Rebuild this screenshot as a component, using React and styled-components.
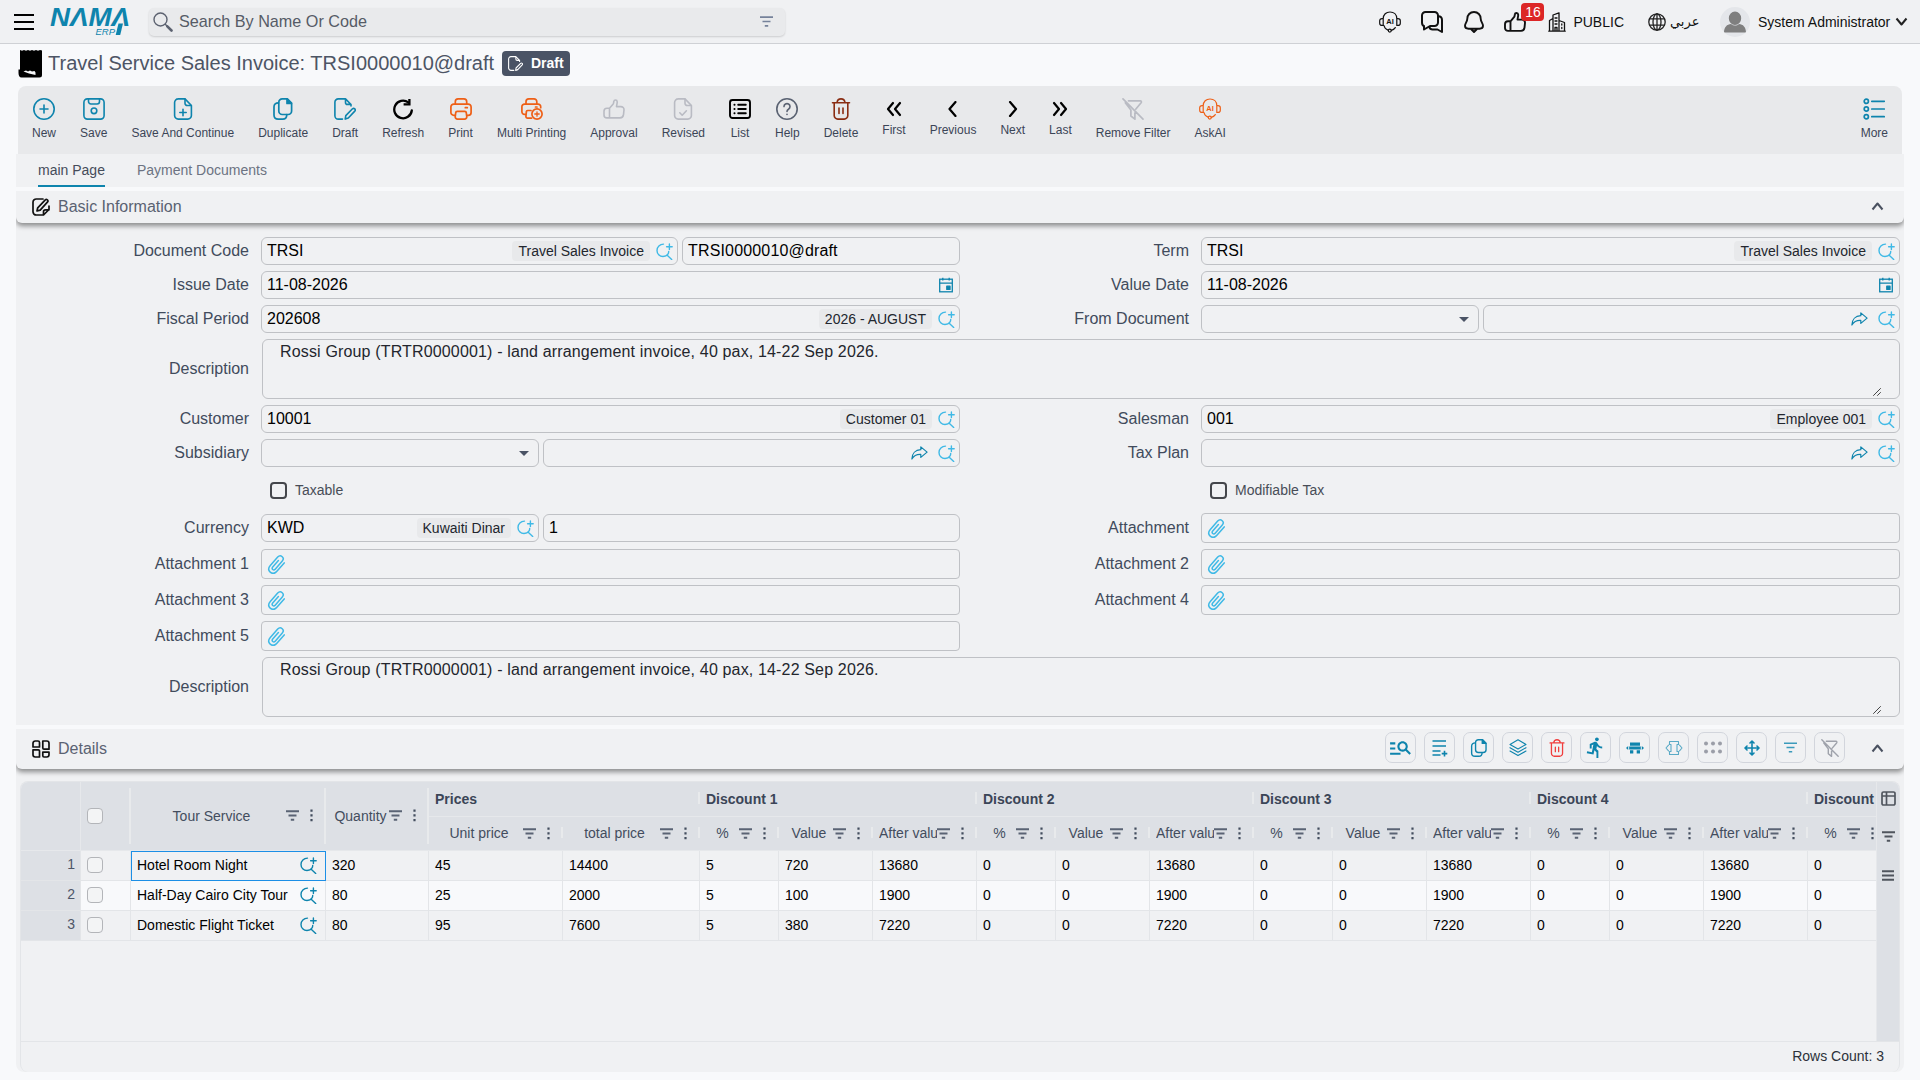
import React from 'react';
import styled, { createGlobalStyle } from 'styled-components';
import { MdDirectionsRun, MdManageSearch } from 'react-icons/md';

const teal = '#0e84ad';
const sky = '#3fb9e6';
const orange = '#ee5f16';

const GlobalStyle = createGlobalStyle`
    *{
        box-sizing:border-box;
    }

    body{
        margin:0;
        height:1080px;
        overflow:hidden;
        background:#f8f9fb;
        font-family:"Liberation Sans", Arial, sans-serif;
        font-size:14px;
        color:#3b4557;
    }
`;

/* ---------- icons ---------- */

function Icon({ w = 22, h = 22, box, color = 'currentColor', stroke = 1.6, children }){
    return(
        <IconStyled width={w} height={h} viewBox={box || `0 0 ${w} ${h}`} fill="none" stroke={color}
            strokeWidth={stroke} strokeLinecap="round" strokeLinejoin="round">
            {children}
        </IconStyled>
    )
}

const IconStyled = styled.svg`
    display:block;
    flex:none;
`;

const NewIcon = () => <Icon color={teal}><circle cx="11" cy="11" r="10.2"/><path d="M11 7v8M7 11h8"/></Icon>;

const SaveIcon = () => (
    <Icon color={teal}>
        <rect x=".9" y=".9" width="20.2" height="20.2" rx="3.5"/>
        <path d="M5.5 1v2.6a2.4 2.4 0 0 0 2.4 2.4h6.2a2.4 2.4 0 0 0 2.4-2.4V1"/>
        <circle cx="11" cy="12.8" r="2.8"/>
    </Icon>
);

const page = 'M6 .9h7l6.4 6.6v10a3.6 3.6 0 0 1-3.6 3.6H6.2a3.6 3.6 0 0 1-3.6-3.6v-13A3.6 3.6 0 0 1 6.2.9z';

const SaveNextIcon = () => <Icon color={teal}><path d={page}/><path d="M13 1v4.3a2.2 2.2 0 0 0 2.2 2.2h4M11 11.3v6.4M7.8 14.5h6.4"/></Icon>;

const RevisedIcon = () => <Icon color="#b9bbc3"><path d={page}/><path d="M13 1v4.3a2.2 2.2 0 0 0 2.2 2.2h4M7.8 14.8l2.4 2.4 4.2-4.4"/></Icon>;

const DuplicateIcon = ({ size = 22 }) => (
    <Icon w={size} h={size} box="0 0 22 22" color={teal} stroke={1.7}>
        <path d="M10.2.9h5.2l4.2 4.2v8a3.4 3.4 0 0 1-3.4 3.4h-6a3.4 3.4 0 0 1-3.4-3.4V4.3A3.4 3.4 0 0 1 10.2.9z"/>
        <path d="M15 1v4.4h4.4z" fill={teal}/>
        <path d="M6.5 4.8C3.7 4.8 2 6.4 2 8.8V17c0 2.500 1.700 4.100 4.200 4.100h4.600c2.200 0 3.900-1.400 4-4.400"/>
    </Icon>
);

const DraftIcon = ({ size = 22, color = teal }) => (
    <Icon w={size} h={size} box="0 0 22 22" color={color}>
        <path d="M8.500 21.100H4.300A3.400 3.400 0 0 1 .9 17.700V4.300A3.400 3.400 0 0 1 4.300.9h7.200l5.500 5.600v1.500M11.500 1v3.400a2 2 0 0 0 2 2H17"/>
        <path d="M11.200 21.100l.6-3.500 6.700-6.800c1.600-1.300 3.600.8 2.300 2.300l-6.500 6.900z"/>
    </Icon>
);

const RefreshIcon = () => (
    <Icon color="#000" stroke={2.3}>
        <path d="M19.800 12.500A8.800 8.800 0 1 1 16.300 4.400"/>
        <path d="M17.400.9v5.400h-5.800" strokeLinejoin="miter" strokeLinecap="butt"/>
    </Icon>
);

const PrintIcon = () => (
    <Icon color={orange} stroke={1.7}>
        <path d="M5.300 6V3.700A2.800 2.800 0 0 1 8.100.9h5.800a2.800 2.800 0 0 1 2.800 2.800V6"/>
        <path d="M5 17.300H3.800a2.900 2.900 0 0 1-2.900-2.900V9A2.900 2.900 0 0 1 3.800 6.100h14.400A2.900 2.900 0 0 1 21.100 9v5.400a2.900 2.900 0 0 1-2.900 2.900H17"/>
        <path d="M7.300 13.300h7.400a1.600 1.600 0 0 1 1.600 1.600l.5 3.900a2.200 2.200 0 0 1-2.200 2.300H7.400a2.200 2.200 0 0 1-2.200-2.300l.5-3.900a1.600 1.600 0 0 1 1.600-1.600zM15.300 9.700h2"/>
    </Icon>
);

const MultiPrintIcon = () => (
    <Icon color={orange} stroke={1.7}>
        <path d="M5 6V3.700A2.800 2.800 0 0 1 7.800.9h5.200a2.800 2.800 0 0 1 2.800 2.800V6"/>
        <path d="M4.600 16.300H3.500a2.600 2.600 0 0 1-2.600-2.600V8.700A2.600 2.600 0 0 1 3.500 6.100h13.600a2.600 2.600 0 0 1 2.600 2.600v1M10 12.500H6.600a1.200 1.200 0 0 0-1.200 1.200l-.5 4.600a1.700 1.700 0 0 0 1.700 1.800h4M14.500 9h1.500"/>
        <circle cx="16" cy="16" r="5.100"/>
        <path d="M16 13.800v4.400M13.800 16h4.400" strokeWidth="1.3"/>
    </Icon>
);

const ThumbIcon = ({ color, stroke }) => (
    <Icon h={20} color={color} stroke={stroke}>
        <path d="M6.500 9.200v9.700M1 13.500v-1.200a3 3 0 0 1 3-3h2.500l3.700-4.400c.5-.7.400-1.300.6-2.400C11.100.5 14 .3 14.200 2.700c.1 1.700-.5 3.100-.7 4.900h4.300c2 0 3.300 1.400 3.200 3.200l-.5 4.900a3.600 3.600 0 0 1-3.500 3.200H4a3 3 0 0 1-3-3z"/>
    </Icon>
);

const ListIcon = () => (
    <Icon color="#000" stroke={1.9}>
        <rect x="1" y="2" width="20" height="18" rx="2.500"/>
        <path d="M9.200 6.800h7.600M9.200 11h7.600M9.200 15.200h7.600M5.400 6.800h.2M5.400 11h.2M5.400 15.200h.2"/>
    </Icon>
);

const HelpIcon = () => (
    <Icon color="#5a6272">
        <circle cx="11" cy="11" r="10.200"/>
        <path d="M8 8.600a3 3 0 1 1 4.500 2.600c-1 .600-1.500 1-1.500 2.200M11 16.200v.2"/>
    </Icon>
);

const TrashIcon = ({ size = 22, color = '#8a2d13' }) => (
    <Icon w={size} h={size} box="0 0 22 22" color={color}>
        <path d="M2.500 4.800h17M7 4.500C7.300 2.200 8.800.9 11 .9s3.700 1.300 4 3.600M4.200 5v12.500a3.600 3.600 0 0 0 3.600 3.600h6.400a3.600 3.600 0 0 0 3.600-3.600V5M9 10v5.500M13 10v5.500"/>
    </Icon>
);

const FilterOffIcon = ({ size = 22, color = '#b9bbc3' }) => (
    <Icon w={size} h={size} box="0 0 22 22" color={color} stroke={1.7}>
        <path d="M1 .9l20 20.200M6.500 2.800h11.800c1 0 1.400 1.200.8 2l-5.400 6.400M3.300 4.800l5.600 7.200v6l4 3.200v-6.400"/>
    </Icon>
);

const HeadsetIcon = ({ color }) => (
    <Icon color={color} stroke={1.2}>
        <path d="M4.200 14.500V7.800C4.200 3.500 7.200 1 11 1s6.800 2.500 6.800 6.800v6.700M4.200 7.600H3C1.500 7.600.7 8.500.7 9.800v2.400c0 1.300.8 2.200 2.300 2.200h1.200M17.800 7.600H19c1.500 0 2.300.9 2.300 2.200v2.400c0 1.300-.8 2.200-2.300 2.200h-1.200M5 14.500c.5 2.500 1.900 4 4 4.600"/>
        <circle cx="10.800" cy="19.600" r="1.500"/>
        <path d="M12.300 19.300c1.500-.3 3-1.200 4-2.700"/>
        <HeadsetText x="11" y="13" textAnchor="middle" fill={color}>AI</HeadsetText>
    </Icon>
);

const HeadsetText = styled.text`
    font-size:7.5px;
    font-weight:700;
    stroke:none;
`;

const chevrons = {
    First: 'M8 2L3 8l5 6M15 2l-5 6 5 6',
    Previous: 'M11.500 1L5.500 8l6 7',
    Next: 'M6 1l6 7-6 7',
    Last: 'M3 2l5 6-5 6M10 2l5 6-5 6',
};

const ChevronIcon = ({ name }) => <Icon w={18} h={16} color="#000" stroke={2.2}><path d={chevrons[name]}/></Icon>;

const MoreIcon = () => (
    <Icon color={teal} stroke={1.7}>
        <circle cx="3.300" cy="3.300" r="2.100"/><circle cx="3.300" cy="11" r="2.100"/><circle cx="3.300" cy="18.700" r="2.100"/>
        <path d="M8.800 3.300h12.500M8.800 11h12.500M8.800 18.700h12.500"/>
    </Icon>
);

const LookupIcon = ({ color = sky }) => (
    <Icon w={17} h={17} color={color} stroke={1.4}>
        <path d="M7.500 1.100C3.800 1.100 1 3.800 1 7.400c0 3.500 2.600 6.100 6 6.100 2.300 0 3.900-.8 4.900-2.300.6-.9.8-1.700.8-2.700M11.200 12.200l4.500 4.200M13.400 1v5.600M10.600 3.800h5.600"/>
    </Icon>
);

const CalendarIcon = () => (
    <Icon w={14} h={16} color={teal} stroke={1.3}>
        <rect x=".7" y="2.200" width="12.600" height="12.600" strokeLinejoin="miter"/>
        <path d="M.7 6.200h12.600M3.800.8v2.600M10.200.8v2.600" strokeLinecap="butt"/>
        <rect x="7.800" y="9.200" width="3.200" height="3.200" fill={teal}/>
    </Icon>
);

const ShareIcon = () => (
    <Icon w={17} h={14} color={teal} stroke={1.2}>
        <path d="M9.800.9l6.300 5.200-6.300 5.300V8.400C5.500 8.200 2.800 9.600.9 13 1 7.600 4.400 3.900 9.800 3.700z"/>
    </Icon>
);

const ClipIcon = () => (
    <Icon w={19} h={19} box="-.5 0 19 19" color={sky} stroke={1.5}>
        <path d="M16.700 7.900l-7.300 8.400c-2.300 2.600-5 2.300-6.700.8-1.700-1.500-2-4.100.1-6.500l7.400-8.500c1.400-1.500 3.200-1.500 4.500-.4 1.300 1.200 1.400 2.900.1 4.400L7.700 14.200c-.8.900-1.800.9-2.500.3-.7-.6-.7-1.600 0-2.500l5.700-6.500"/>
    </Icon>
);

const FilterIcon = ({ w = 13, color = '#5a6374', stroke = 2 }) => (
    <Icon w={w} h={11} box="0 0 13 11" color={color} stroke={stroke}>
        <path d="M0 1.200h13M2.500 5.500h8M4.800 9.800h3.400" strokeLinecap="butt"/>
    </Icon>
);

const DotsIcon = () => (
    <Icon w={3} h={13} stroke={0}>
        <path d="M.4.500h2.200v2.200H.4zM.4 5.300h2.200v2.200H.4zM.4 10.100h2.200v2.200H.4z" fill="#434d5e"/>
    </Icon>
);

const CaretIcon = ({ down, w = 13, h = 9, color = '#4a5160' }) => (
    <Icon w={w} h={h} box="0 0 13 9" color={color} stroke={2}>
        <path d={down ? 'M1.500 1.500l5 6 5-6' : 'M1.500 7.500l5-6 5 6'} strokeLinecap="butt"/>
    </Icon>
);

const EditIcon = () => (
    <Icon w={18} h={18} color="#111" stroke={1.7}>
        <path d="M11 1H4.300A3.300 3.300 0 0 0 1 4.300v9.400A3.300 3.300 0 0 0 4.300 17h7.200l5.500-5.500V8M11.500 17v-3.200a2 2 0 0 1 2-2H17"/>
        <path d="M5 13l.7-3.200 7.600-8c1.300-1.200 3.400.6 2.300 2.100l-7.400 8.200z"/>
    </Icon>
);

const BlocksIcon = () => (
    <Icon w={18} h={18} color="#111" stroke={1.7}>
        <path d="M3.200 1H6a1.500 1.500 0 0 1 1.500 1.500V7H1V3.200A2.200 2.200 0 0 1 3.200 1zM10.800 1h4A2.200 2.200 0 0 1 17 3.200v6H12a1.200 1.200 0 0 1-1.200-1.200zM1 9.800h5.300A1.200 1.200 0 0 1 7.500 11v6H3.200A2.200 2.200 0 0 1 1 14.800zM10.800 12.200H17v2.600a2.200 2.200 0 0 1-2.200 2.200H12a1.200 1.200 0 0 1-1.200-1.200z"/>
    </Icon>
);

const AddRowIcon = () => <Icon w={20} h={20} color={teal}><path d="M2.500 3h13.500M2.500 8h13.500M2.500 13h8M2.500 17h8M14.500 12.800v5.600M11.700 15.600h5.600" strokeLinecap="butt"/></Icon>;

const LayersIcon = () => <Icon w={18} h={18} color={teal} stroke={1.1}><path d="M9 .8l8 4.600L9 10 1 5.400zM1 8.700l8 4.600 8-4.600M1 12l8 4.600L17 12"/></Icon>;

const InsertIcon = () => (
    <Icon w={18} h={14} color="none">
        <path d="M4 1.500h10v3.200H4zM3.200 5.400h11.600v3.200H3.200zM4 9.300h3.300v3.200H4zM10.700 9.300H14v3.200h-3.300zM0 7l2.200-2v4zM18 7l-2.200-2v4z" fill={teal}/>
    </Icon>
);

const FitIcon = () => <Icon w={18} h={16} color="#5aaac6" stroke={1.1}><path d="M4.500 4.500v-3h9v3h-1.500v7h1.500v3h-9v-3H6v-7zM3.500 5.200L1 8l2.500 2.800M14.500 5.200L17 8l-2.500 2.800"/></Icon>;

const GripIcon = () => (
    <Icon w={18} h={14} color="none">
        {[2, 9, 16].map((x) => [2.5, 10.5].map((y) => <circle key={x + '-' + y} cx={x} cy={y} r="2" fill="#9b9ea8"/>))}
    </Icon>
);

const MoveIcon = () => <Icon w={16} h={16} color={teal} stroke={1.6}><path d="M8 1.200v13.600M1.200 8h13.600M6 3l2-2 2 2M6 13l2 2 2-2M3 6L1 8l2 2M13 6l2 2-2 2"/></Icon>;

const ReceiptIcon = () => (
    <Icon w={25} h={29} color="none">
        <path d="M2 1l2 .8 2-.8 2 .8 2-.8 2 .8 2-.8 2 .8 2-.8 2 .8 2-.8 2 .5V26a2.500 2.500 0 0 1-2.500 2.500H3.500C1.500 28.500.5 26.500.5 24V20.500H2z" fill="#000"/>
        <path d="M5.500 22.500l2.500-1 2 1 2-1 2 1 2.500-.5 1 1.500v2.500L11 24.500z" fill="#f8f9fb"/>
    </Icon>
);

const ChatIcon = () => (
    <Icon color="#111" stroke={2}>
        <path d="M4.500 1h9A3.500 3.500 0 0 1 17 4.500v7a3.500 3.500 0 0 1-3.500 3.500H9l-6 3.500V15C1.500 14.700 1 13.500 1 11.500v-7A3.500 3.500 0 0 1 4.500 1z"/>
        <path d="M17.200 5.200C20 5.300 21 6.500 21 9v12l-4.500-2.500h-5c-1.500 0-2.700-.7-3.200-2.500"/>
    </Icon>
);

const BellIcon = () => (
    <Icon w={20} h={22} color="#111" stroke={1.9}>
        <path d="M10 1C6 1 3.300 4 3.300 7.800c0 3-2.300 4.500-2.300 7 0 1.800 1.300 2.900 3.500 2.900h11c2.200 0 3.500-1.100 3.500-2.900 0-2.500-2.300-4-2.300-7C16.700 4 14 1 10 1zM7 18l3 3 3-3"/>
    </Icon>
);

const BuildingIcon = () => (
    <Icon w={18} h={20} color="#111" stroke={1.3}>
        <path d="M.8 19.200h16.400M1.500 19V8.500L5 6.500V19M5 6V3l6-2.200V19M11 8.500l5.500 2V19M7 6h2M7 9h2M7 12h2M7 19v-3.500h2V19M13.800 12v1M13.800 15.500v1"/>
    </Icon>
);

const GlobeIcon = () => (
    <Icon w={18} h={18} color="#222" stroke={1.3}>
        <circle cx="9" cy="9" r="8.200"/><ellipse cx="9" cy="9" rx="4" ry="8.200"/>
        <path d="M9 .8v16.400M1.800 5.800h14.400M1.800 12.200h14.400"/>
    </Icon>
);

const ColumnsIcon = () => <Icon w={15} h={15} color="#50555e" stroke={1.7}><path d="M2.500 1h10A1.500 1.500 0 0 1 14 2.500v10a1.500 1.500 0 0 1-1.500 1.500h-10A1.500 1.500 0 0 1 1 12.500v-10A1.500 1.500 0 0 1 2.500 1zM1 5h13M5.500 1v13"/></Icon>;

/* ---------- header ---------- */

function Header(){
    return(
        <HeaderStyled>
            <Icon w={20} h={16} color="#000" stroke={2}><path d="M0 1h20M0 8h20M0 15h20" strokeLinecap="butt"/></Icon>
            <Logo/>
            <SearchBox>
                <Icon w={20} h={20} color="#5c6270" stroke={1.4}>
                    <circle cx="7.500" cy="7.500" r="6.500"/>
                    <path d="M12.500 12.500l2 2"/><path d="M14.300 14.300l4.200 4.200" strokeWidth="2.600"/>
                </Icon>
                <span>Search By Name Or Code</span>
                <FilterIcon w={17} color="#76829a" stroke={1.7}/>
            </SearchBox>
            <HeaderActions>
                <HeadsetIcon color="#111"/>
                <ChatIcon/>
                <BellIcon/>
                <Approvals><ThumbIcon color="#111" stroke={1.9}/><Counter>16</Counter></Approvals>
            </HeaderActions>
            <HeaderLink className="branch"><BuildingIcon/>PUBLIC</HeaderLink>
            <HeaderLink className="language"><GlobeIcon/><Arabic lang="ar">عربي</Arabic></HeaderLink>
            <UserMenu>
                <Avatar>
                    <svg width="30" height="30" viewBox="0 0 30 30"><path d="M15 4.500a5.500 6 0 1 1 0 13.500 5.500 6 0 1 1 0-13.500zM4 25.500c0-5 3-8.500 7-8.500 2.500 2 5.500 2 8 0 4 0 7 3.500 7 8.500z" fill="#7f7f7f"/></svg>
                </Avatar>
                <span>System Administrator</span>
                <CaretIcon down w={13} h={9} color="#222"/>
            </UserMenu>
        </HeaderStyled>
    )
}

function Logo(){
    return(
        <LogoStyled width="80" height="29" viewBox="0 0 80 29">
            <text x="0" y="18.800" className="name" textLength="80" lengthAdjust="spacingAndGlyphs">NΛMΛ</text>
            <text x="45.500" y="27.500" className="erp">ERP</text>
            <path d="M68.500 16.500h4.500l-2.800 11.500h-4.500z"/>
        </LogoStyled>
    )
}

const LogoStyled = styled.svg`
    margin-left:16px;
    overflow:visible;
    fill:${teal};

    .name{
        font-size:25px;
        font-weight:700;
        font-style:italic;
    }

    .erp{
        font-size:9.5px;
        font-style:italic;
    }
`;

const HeaderStyled = styled.header`
    display:flex;
    align-items:center;
    height:44px;
    padding:0 12px 0 14px;
    background:#f0f1f3;
    border-bottom:1px solid #cfd1d5;
    color:#111;

    .branch{
        margin-left:22px;
        gap:7px;
    }

    .language{
        margin-left:24px;
        gap:4px;
    }
`;

const SearchBox = styled.div`
    display:flex;
    align-items:center;
    width:636px;
    height:28px;
    margin-left:19px;
    padding:0 10px 0 4px;
    background:#e9eaec;
    border-radius:5px;
    box-shadow:0 1px 2px rgba(0, 0, 0, .15);
    font-size:16.2px;
    color:#565b66;

    span{
        flex:1;
        margin-left:6px;
    }
`;

const HeaderActions = styled.div`
    display:flex;
    align-items:center;
    gap:20px;
    margin-left:auto;

    svg:nth-child(3){
        margin:0 -1px 0 1px;
    }
`;

const Approvals = styled.div`
    position:relative;
    margin-left:1px;
`;

const Counter = styled.span`
    position:absolute;
    top:-9px;
    left:17px;
    width:23px;
    height:18px;
    border-radius:4px;
    background:#dc2626;
    color:#fff;
    line-height:18px;
    text-align:center;
`;

const HeaderLink = styled.div`
    display:flex;
    align-items:center;
`;

const Arabic = styled.span`
    width:25px;
    font-family:"DejaVu Sans", sans-serif;
    font-size:13px;
    white-space:nowrap;
`;

const UserMenu = styled.div`
    display:flex;
    align-items:center;
    margin-left:25px;

    span{
        width:132px;
        margin:0 5px 0 8px;
        white-space:nowrap;
    }
`;

const Avatar = styled.div`
    width:30px;
    height:30px;
    border-radius:50%;
    overflow:hidden;
    background:#e4e6ea;
`;

/* ---------- title and toolbar ---------- */

const actions = [
    ['New', <NewIcon/>],
    ['Save', <SaveIcon/>],
    ['Save And Continue', <SaveNextIcon/>],
    ['Duplicate', <DuplicateIcon/>],
    ['Draft', <DraftIcon/>],
    ['Refresh', <RefreshIcon/>],
    ['Print', <PrintIcon/>],
    ['Multi Printing', <MultiPrintIcon/>],
    ['Approval', <ThumbIcon color="#b9bbc3"/>],
    ['Revised', <RevisedIcon/>],
    ['List', <ListIcon/>],
    ['Help', <HelpIcon/>],
    ['Delete', <TrashIcon/>],
    ['First', <ChevronIcon name="First"/>, true],
    ['Previous', <ChevronIcon name="Previous"/>, true],
    ['Next', <ChevronIcon name="Next"/>, true],
    ['Last', <ChevronIcon name="Last"/>, true],
    ['Remove Filter', <FilterOffIcon/>],
    ['AskAI', <HeadsetIcon color={orange}/>],
];

function TitleBar(){
    return(
        <TitleStyled>
            <ReceiptIcon/>
            <h1>Travel Service Sales Invoice: TRSI0000010@draft</h1>
            <StatusBadge><DraftIcon size={15} color="#fff"/>Draft</StatusBadge>
        </TitleStyled>
    )
}

const TitleStyled = styled.div`
    display:flex;
    align-items:center;
    height:42px;
    padding:0 18px 4px;

    h1{
        width:446px;
        margin:0 8px 0 5px;
        font-size:20px;
        font-weight:400;
        white-space:nowrap;
        color:#4d5565;
    }
`;

const StatusBadge = styled.div`
    display:flex;
    align-items:center;
    gap:8px;
    width:68px;
    height:25px;
    padding-left:6px;
    border-radius:4px;
    background:#4a5365;
    color:#fff;
    font-weight:700;
`;

function Toolbar(){
    return(
        <ToolbarStyled>
            {actions.map(([label, icon, small]) => <ToolButton key={label} $small={small}><div>{icon}</div>{label}</ToolButton>)}
            <ToolButton className="more"><div><MoreIcon/></div>More</ToolButton>
        </ToolbarStyled>
    )
}

const ToolbarStyled = styled.div`
    display:flex;
    align-items:flex-start;
    gap:24px;
    height:68px;
    margin:0 2px;
    padding:12px 14px 0;
    border-radius:8px 8px 0 0;
    background:#e8e9eb;

    .more{
        margin-left:auto;
    }
`;

const ToolButton = styled.div`
    display:flex;
    flex-direction:column;
    align-items:center;
    gap:${(p) => (p.$small ? '3px' : '6px')};
    font-size:12px;
    line-height:14px;
    white-space:nowrap;

    div{
        display:flex;
        align-items:center;
        height:22px;
    }
`;

const Tabs = styled.div`
    display:flex;
    gap:32px;
    height:33px;
    padding-left:22px;
    background:#f0f1f3;
`;

const Tab = styled.div`
    height:33px;
    padding-top:8px;
    border-bottom:2px solid ${(p) => (p.$active ? teal : 'transparent')};
    color:${(p) => (p.$active ? '#454c5a' : '#6c7382')};
`;

/* ---------- sections ---------- */

const Page = styled.main`
    width:1888px;
    margin:0 16px;
`;

const Section = styled.section`
    height:${(p) => p.$height}px;
    margin-top:4px;
    overflow:hidden;
    background:#f0f1f3;
    border-radius:${(p) => (p.$last ? '0 0 8px 8px' : '0')};
`;

const SectionHeader = styled.div`
    display:flex;
    align-items:center;
    height:${(p) => p.$height}px;
    padding:0 20px 0 16px;
    border-radius:0 0 6px 6px;
    box-shadow:0 3px 5px rgba(0, 0, 0, .42);
    font-size:16px;
    color:#5a6272;

    h2{
        flex:1;
        margin:0 0 0 8px;
        font-size:16px;
        font-weight:400;
    }

    > svg:last-child{
        margin-bottom:1px;
    }
`;

const Tools = styled.div`
    display:flex;
    gap:8px;
    margin:-3px 26px 0 0;
`;

const Tool = styled.div`
    display:flex;
    align-items:center;
    justify-content:center;
    width:31px;
    height:31px;
    border:1px solid #d2d5dc;
    border-radius:7px;
`;

/* ---------- form ---------- */

const FormGrid = styled.div`
    display:grid;
    grid-template-columns:940px 940px;
    row-gap:6px;
    padding:14px 4px 0;
`;

const FieldRow = styled.div`
    display:grid;
    grid-template-columns:229px ${(p) => (p.$wide ? '1638px' : '699px')};
    justify-content:space-between;
    align-items:center;
    grid-column:${(p) => (p.$wide ? 'span 2' : 'auto')};
    height:${(p) => p.$height || 28}px;

    label{
        padding-bottom:1px;
        text-align:right;
        font-size:16px;
        color:#414b5c;
    }
`;

const Inputs = styled.div`
    display:grid;
    grid-template-columns:${(p) => p.$split || '1fr'};
    gap:4px;
`;

const Input = styled.div`
    display:flex;
    align-items:center;
    height:${(p) => p.$height || 28}px;
    padding:0 ${(p) => p.$right || 5}px 0 5px;
    border:1px solid #bfc1c5;
    border-radius:${(p) => (p.$height ? 4 : 6)}px;
    font-size:16px;
    color:#000;

    .value{
        flex:1;
        padding-bottom:1px;
    }

    .code{
        letter-spacing:.16px;
    }
`;

const Tag = styled.span`
    height:20px;
    margin-right:6px;
    padding:0 6px;
    border-radius:4px;
    background:#e8e9eb;
    font-size:14px;
    line-height:20px;
    color:#22262e;
`;

const Gap = styled.span`
    width:10px;
`;

const Arrow = styled.span`
    margin-right:4px;
    border:5px solid transparent;
    border-top-color:#4a5365;
    border-bottom:0;
`;

const TextArea = styled.div`
    display:flex;
    justify-content:space-between;
    height:60px;
    padding:3px 18px 2px 17px;
    border:1px solid #bfc1c5;
    border-radius:6px;
    font-size:16px;
    letter-spacing:.155px;
    line-height:18px;
    color:#23262d;

    svg{
        align-self:flex-end;
    }
`;

const CheckField = styled.div`
    display:flex;
    align-items:center;
    gap:8px;
    height:34px;
    padding-left:250px;
    color:#484d57;
`;

const CheckBox = styled.span`
    width:17px;
    height:17px;
    border:2px solid #44464b;
    border-radius:4px;
`;

function Lookup({ value, tag, share }){
    return(
        <Input $right={4}>
            <span className="value">{value}</span>
            {tag && <Tag>{tag}</Tag>}
            {share && <><ShareIcon/><Gap/></>}
            <LookupIcon/>
        </Input>
    )
}

const DateInput = ({ value }) => <Input $right={6}><span className="value">{value}</span><CalendarIcon/></Input>;

const Select = () => <Input><span className="value"/><Arrow/></Input>;

function Field({ label, split, height, children }){
    return(
        <FieldRow $height={height}>
            <label>{label}</label>
            <Inputs $split={split}>{children}</Inputs>
        </FieldRow>
    )
}

const Attachment = ({ label }) => <Field label={label} height={30}><Input $height={30}><ClipIcon/></Input></Field>;

function Description(){
    return(
        <FieldRow $wide $height={60}>
            <label>Description</label>
            <TextArea>
                <span>Rossi Group (TRTR0000001) - land arrangement invoice, 40 pax, 14-22 Sep 2026.</span>
                <Icon w={8} h={8} color="#444" stroke={1}><path d="M.5 7.500l7-7M4.500 7.500l3-3"/></Icon>
            </TextArea>
        </FieldRow>
    )
}

function BasicInformation(){
    return(
        <Section $height={534}>
            <SectionHeader $height={32}><EditIcon/><h2>Basic Information</h2><CaretIcon/></SectionHeader>
            <FormGrid>
                <Field label="Document Code" split="417px 278px">
                    <Lookup value="TRSI" tag="Travel Sales Invoice"/>
                    <Input><span className="value code">TRSI0000010@draft</span></Input>
                </Field>
                <Field label="Term"><Lookup value="TRSI" tag="Travel Sales Invoice"/></Field>
                <Field label="Issue Date"><DateInput value="11-08-2026"/></Field>
                <Field label="Value Date"><DateInput value="11-08-2026"/></Field>
                <Field label="Fiscal Period"><Lookup value="202608" tag="2026 - AUGUST"/></Field>
                <Field label="From Document" split="278px 417px"><Select/><Lookup share/></Field>
                <Description/>
                <Field label="Customer"><Lookup value="10001" tag="Customer 01"/></Field>
                <Field label="Salesman"><Lookup value="001" tag="Employee 001"/></Field>
                <Field label="Subsidiary" split="278px 417px"><Select/><Lookup share/></Field>
                <Field label="Tax Plan"><Lookup share/></Field>
                <CheckField><CheckBox/>Taxable</CheckField>
                <CheckField><CheckBox/>Modifiable Tax</CheckField>
                <Field label="Currency" split="278px 417px" height={30}>
                    <Lookup value="KWD" tag="Kuwaiti Dinar"/>
                    <Input><span className="value">1</span></Input>
                </Field>
                <Attachment label="Attachment"/>
                <Attachment label="Attachment 1"/>
                <Attachment label="Attachment 2"/>
                <Attachment label="Attachment 3"/>
                <Attachment label="Attachment 4"/>
                <Attachment label="Attachment 5"/>
                <span/>
                <Description/>
            </FormGrid>
        </Section>
    )
}

/* ---------- details grid ---------- */

const discounts = [1, 2, 3, 4];
const columns = '60px 50px 195px 103px 134px 137px' + ' 79px 94px 104px'.repeat(4) + ' 79px';

const lines = [
    { name: 'Hotel Room Night', qty: 320, unit: 45, total: 14400, discount: 720, after: 13680 },
    { name: 'Half-Day Cairo City Tour', qty: 80, unit: 25, total: 2000, discount: 100, after: 1900 },
    { name: 'Domestic Flight Ticket', qty: 80, unit: 95, total: 7600, discount: 380, after: 7220 },
];

const Table = styled.div`
    display:flex;
    flex-direction:column;
    width:1880px;
    height:291px;
    margin:12px 4px 0;
    border:1px solid #e3e5e8;
    border-bottom:0;
    border-radius:8px;
    overflow:hidden;
`;

const TableTop = styled.div`
    display:flex;
    height:260px;
    border-bottom:1px solid #e3e5e8;
`;

const Viewport = styled.div`
    width:1855px;
    overflow:hidden;
`;

const HeadGrid = styled.div`
    display:grid;
    grid-template-columns:${columns};
    grid-template-rows:35px 34px;
    width:max-content;
    background:#dde0e5;
    color:#434d5e;
`;

const HeadCell = styled.div`
    position:relative;
    display:flex;
    align-items:center;
    grid-row:${(p) => (p.$tall ? '1 / span 2' : '2')};
    padding:0 13px 1px 6px;
    border-bottom:1px solid #e6e8eb;
    border-right:${(p) => (p.$line ? '1px solid #e6e8eb' : '0')};

    .label{
        flex:1;
        min-width:0;
        overflow:hidden;
        white-space:nowrap;
        text-align:center;
    }

    svg + svg{
        margin-left:11px;
    }

    /* resize handle */
    &::after{
        content:"";
        display:${(p) => (p.$line ? 'none' : 'block')};
        position:absolute;
        right:0;
        top:${(p) => (p.$tall ? 6 : 10)}px;
        bottom:${(p) => (p.$tall ? 6 : 12)}px;
        width:2px;
        background:#e8eaec;
    }
`;

const GroupCell = styled(HeadCell)`
    grid-row:1;
    grid-column:span ${(p) => p.$span};
    padding-right:0;
    font-weight:700;
    white-space:nowrap;
    color:#3b4557;
`;

const Row = styled.div`
    display:grid;
    grid-template-columns:${columns};
    width:max-content;
    height:30px;
    background:${(p) => (p.$even ? '#f8f9fb' : '#f0f1f3')};
`;

const Cell = styled.div`
    display:flex;
    align-items:center;
    padding:0 8px 1px 6px;
    border-right:1px solid #e3e5e8;
    border-bottom:1px solid #e3e5e8;
    color:#000;

    span{
        flex:1;
    }
`;

const ServiceCell = styled(Cell)`
    outline:${(p) => (p.$selected ? '1px solid #1c8fe6' : '0')};
    outline-offset:-1px;
    ${(p) => p.$selected && 'border-color:#1c8fe6;'}
`;

const NumberCell = styled(Cell)`
    justify-content:flex-end;
    padding:0 5px 3px 0;
    background:#dde0e5;
    color:#4d5668;
`;

const GridCheck = styled.div`
    width:16px;
    height:16px;
    border:1px solid #b3b5b9;
    border-radius:4px;
    background:#f3f4f5;
`;

const SideBar = styled.div`
    display:flex;
    flex-direction:column;
    align-items:center;
    flex:1;
    padding-top:9px;
    border-left:1px solid #e6e8eb;
    background:#dde0e5;

    svg:nth-child(2){
        margin-top:25px;
    }

    svg:nth-child(3){
        margin-top:28px;
    }
`;

const Footer = styled.div`
    flex:1;
    padding:6px 15px 0 0;
    text-align:right;
    color:#2c313a;
`;

const Column = ({ title, tall }) => <HeadCell $tall={tall}><span className="label">{title}</span><FilterIcon/><DotsIcon/></HeadCell>;

function DetailTools(){
    const icons = [
        <MdManageSearch size={25} color={teal}/>,
        <AddRowIcon/>, <DuplicateIcon size={18}/>, <LayersIcon/>, <TrashIcon size={18} color="#f03e3e"/>,
        <MdDirectionsRun size={23} color={teal}/>, <InsertIcon/>, <FitIcon/>, <GripIcon/>, <MoveIcon/>,
        <FilterIcon w={15} color="#3b9abb" stroke={1.4}/>, <FilterOffIcon size={18} color="#9fa2ab"/>,
    ];
    return <Tools>{icons.map((icon, i) => <Tool key={i}>{icon}</Tool>)}</Tools>
}

function Details(){
    return(
        <Section $height={343} $last>
            <SectionHeader $height={40}>
                <BlocksIcon/><h2>Details</h2><DetailTools/><CaretIcon/>
            </SectionHeader>
            <Table>
                <TableTop>
                    <Viewport>
                        <HeadGrid>
                            <HeadCell $tall $line/>
                            <HeadCell $tall><GridCheck/></HeadCell>
                            <Column title="Tour Service" tall/>
                            <Column title="Quantity" tall/>
                            <GroupCell $span={2}>Prices</GroupCell>
                            {discounts.map((n) => <GroupCell key={n} $span={3}>Discount {n}</GroupCell>)}
                            <GroupCell $span={1}>Discount</GroupCell>
                            <Column title="Unit price"/>
                            <Column title="total price"/>
                            {discounts.map((n) => (
                                <React.Fragment key={n}>
                                    <Column title="%"/><Column title="Value"/><Column title="After value"/>
                                </React.Fragment>
                            ))}
                            <Column title="%"/>
                        </HeadGrid>
                        {lines.map((line, i) => (
                            <Row key={line.name} $even={i % 2 === 1}>
                                <NumberCell>{i + 1}</NumberCell>
                                <Cell><GridCheck/></Cell>
                                <ServiceCell $selected={i === 0}><span>{line.name}</span><LookupIcon color={teal}/></ServiceCell>
                                <Cell>{line.qty}</Cell>
                                <Cell>{line.unit}</Cell>
                                <Cell>{line.total}</Cell>
                                {discounts.map((n) => (
                                    <React.Fragment key={n}>
                                        <Cell>{n === 1 ? 5 : 0}</Cell>
                                        <Cell>{n === 1 ? line.discount : 0}</Cell>
                                        <Cell>{line.after}</Cell>
                                    </React.Fragment>
                                ))}
                                <Cell>0</Cell>
                            </Row>
                        ))}
                    </Viewport>
                    <SideBar>
                        <ColumnsIcon/>
                        <FilterIcon color="#50555e"/>
                        <Icon w={12} h={11} color="#50555e" stroke={1.9}><path d="M0 1.200h12M0 5.500h12M0 9.800h12" strokeLinecap="butt"/></Icon>
                    </SideBar>
                </TableTop>
                <Footer>Rows Count: 3</Footer>
            </Table>
        </Section>
    )
}

function App(){
    return(
        <>
            <GlobalStyle/>
            <Header/>
            <TitleBar/>
            <Page>
                <Toolbar/>
                <Tabs><Tab $active>main Page</Tab><Tab>Payment Documents</Tab></Tabs>
                <BasicInformation/>
                <Details/>
            </Page>
        </>
    )
}

export default App;
